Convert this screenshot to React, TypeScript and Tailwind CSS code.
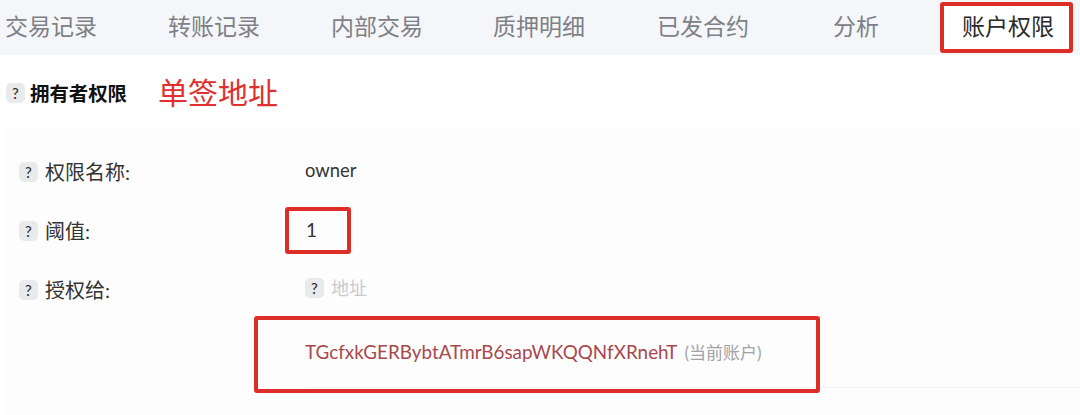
const tabs = [
  { label: '交易记录', className: 'ml-[5px]' },
  { label: '转账记录', className: 'ml-[71px]' },
  { label: '内部交易', className: 'ml-[71px]' },
  { label: '质押明细', className: 'ml-[70px]' },
  { label: '已发合约', className: 'ml-[72px]' },
  { label: '分析', className: 'ml-[84px]' },
];

function Help({ className = '' }: { className?: string }) {
  return (
    <span className={`flex h-[20px] w-[19px] shrink-0 items-center justify-center rounded-[5px] bg-[#e9eaec] text-[15px] font-medium leading-none text-[#333] ${className}`}>
      ?
    </span>
  );
}

function Row({ label, children, className = '' }: { label: string; children: React.ReactNode; className?: string }) {
  return (
    <div className={`flex items-center ${className}`}>
      <div className="flex w-[286px] items-center gap-[7px] text-[20px] leading-none text-[#333]">
        <Help />
        {label}
      </div>
      {children}
    </div>
  );
}

export default function App() {
  return (
    <div className="flex h-[415px] w-[1080px] flex-col overflow-hidden bg-white font-['Lato','Noto_Sans_CJK_SC',sans-serif]">
      {/* Tabs */}
      <div className="flex h-[55px] shrink-0 items-center bg-[#f5f6fa] text-[23px] leading-none text-[#7d8085]">
        {tabs.map(tab => (
          <span key={tab.label} className={`${tab.className} pb-[3px]`}>{tab.label}</span>
        ))}
        <span className="ml-[61px] mt-[2px] flex h-[51px] w-[133px] items-center justify-center self-start rounded-[3px] border-[4px] border-[#dc2e26] bg-white pb-[3px] pl-[3px] text-[#2b2b2b]">
          账户权限
        </span>
      </div>

      {/* Owner heading */}
      <div className="flex h-[72px] shrink-0 items-center pl-[6px] pt-[4px]">
        <Help />
        <span className="ml-[5px] mt-[1px] text-[19.4px] font-bold leading-none text-[#111]">拥有者权限</span>
        <span className="ml-[31px] mb-[3px] text-[30px] leading-none text-[#e0312f]">单签地址</span>
      </div>

      {/* Permission panel */}
      <div className="ml-[5px] flex-1 bg-[#fdfdfe] pl-[14px]">
        <Row label="权限名称:" className="mt-[35px] h-[20px]">
          <span className="mb-[4px] text-[18.4px] leading-none text-[#333]">owner</span>
        </Row>
        <Row label="阈值:" className="mt-[39px] h-[20px]">
          <span className="relative mb-[4px] ml-[1px] text-[19px] leading-none text-[#333]">
            1
            <span className="absolute left-[-21px] top-[-13px] h-[47px] w-[66px] rounded-[3px] border-[4px] border-[#dc2e26]" />
          </span>
        </Row>
        <Row label="授权给:" className="mt-[39px] h-[20px]">
          <div className="mb-[4px] flex items-center gap-[7px] text-[18px] leading-none text-[#c9cacc]">
            <Help />
            地址
          </div>
        </Row>
        <div className="relative ml-[286px] mt-[27px] flex h-[61px] items-center border-b border-[#f0f1f3] pb-[10px] text-[18.85px] leading-none">
          <span className="text-[#a8484c]">TGcfxkGERBybtATmrB6sapWKQQNfXRnehT</span>
          <span className="ml-[7px] text-[17px] text-[#a0a2a6]">(当前账户)</span>
          <span className="absolute left-[-51px] top-[-11px] h-[77px] w-[566px] rounded-[3px] border-[4px] border-[#dc2e26]" />
        </div>
      </div>
    </div>
  );
}
